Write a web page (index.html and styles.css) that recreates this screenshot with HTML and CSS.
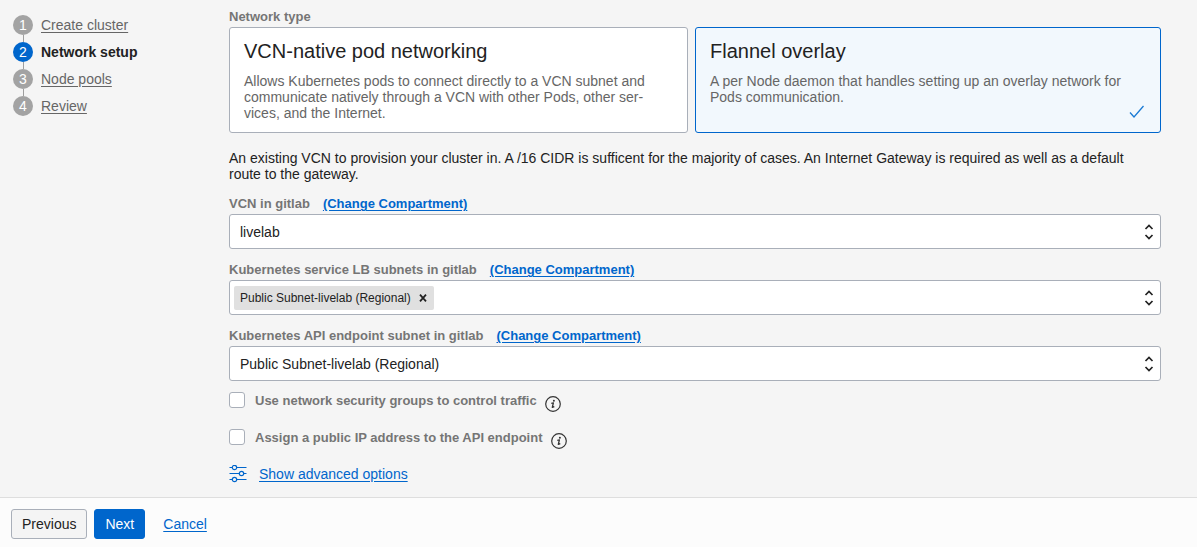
FILE: index.html
```html
<!DOCTYPE html>
<html lang="en">
<head>
<meta charset="utf-8">
<meta name="viewport" content="width=device-width, initial-scale=1">
<title>Create cluster - Network setup</title>
<link rel="stylesheet" href="styles.css">
</head>
<body>
<form class="wizard">
  <div class="content">
    <nav class="steps" aria-label="Steps">
      <ol class="step-list">
        <li class="step"><span class="step-number">1</span><a class="step-name" href="#create">Create cluster</a></li>
        <li class="step current" aria-current="step"><span class="step-number">2</span><strong class="step-name">Network setup</strong></li>
        <li class="step"><span class="step-number">3</span><a class="step-name" href="#pools">Node pools</a></li>
        <li class="step"><span class="step-number">4</span><a class="step-name" href="#review">Review</a></li>
      </ol>
    </nav>
    <main class="main">
      <div class="caption" id="network-type">Network type</div>
      <div class="cards" role="radiogroup" aria-labelledby="network-type">
        <label class="card">
          <input class="card-radio" type="radio" name="network">
          <span class="card-title">VCN-native pod networking</span>
          <span class="card-text">Allows Kubernetes pods to connect directly to a VCN subnet and communicate natively through a VCN with other Pods, other ser&shy;vices, and the Internet.</span>
        </label>
        <label class="card selected">
          <input class="card-radio" type="radio" name="network" checked>
          <span class="card-title">Flannel overlay</span>
          <span class="card-text">A per Node daemon that handles setting up an overlay network for Pods communication.</span>
          <svg class="card-check" width="16" height="14" viewBox="0 0 16 14" aria-hidden="true"><path d="M1 7.500 5 12 14.500 1" fill="none" stroke="currentColor" stroke-width="1.300"/></svg>
        </label>
      </div>
      <p class="intro">An existing VCN to provision your cluster in. A /16 CIDR is sufficent for the majority of cases. An Internet Gateway is required as well as a default route to the gateway.</p>

      <div class="field">
        <div class="field-head"><label class="caption" for="vcn">VCN in <b>gitlab</b></label><a class="change" href="#vcn-compartment">(Change Compartment)</a></div>
        <div class="control">
          <select class="select" id="vcn"><option>livelab</option></select>
          <svg class="arrows" width="10" height="16" viewBox="0 0 10 16" aria-hidden="true"><path d="M1.500 5 5 1.500 8.500 5M1.500 11 5 14.500 8.500 11"/></svg>
        </div>
      </div>
      <div class="field">
        <div class="field-head"><label class="caption" for="lb">Kubernetes service LB subnets in <b>gitlab</b></label><a class="change" href="#lb-compartment">(Change Compartment)</a></div>
        <div class="control tags">
          <span class="tag">Public Subnet-livelab (Regional)<button class="remove" type="button" aria-label="Remove Public Subnet-livelab"><svg width="8" height="8" viewBox="0 0 8 8" aria-hidden="true"><path d="M1 .7 7 7.300M7 .7 1 7.300" stroke="currentColor" stroke-width="1.800"/></svg></button></span>
          <input class="tag-input" id="lb" type="text">
          <svg class="arrows" width="10" height="16" viewBox="0 0 10 16" aria-hidden="true"><path d="M1.500 5 5 1.500 8.500 5M1.500 11 5 14.500 8.500 11"/></svg>
        </div>
      </div>
      <div class="field">
        <div class="field-head"><label class="caption" for="api">Kubernetes API endpoint subnet in <b>gitlab</b></label><a class="change" href="#api-compartment">(Change Compartment)</a></div>
        <div class="control">
          <select class="select" id="api"><option>Public Subnet-livelab (Regional)</option></select>
          <svg class="arrows" width="10" height="16" viewBox="0 0 10 16" aria-hidden="true"><path d="M1.500 5 5 1.500 8.500 5M1.500 11 5 14.500 8.500 11"/></svg>
        </div>
      </div>

      <div class="options">
        <div class="option">
          <input class="check" type="checkbox" id="nsg"><label class="caption" for="nsg">Use network security groups to control traffic</label>
          <svg class="info" width="16" height="16" viewBox="0 0 16 16" aria-hidden="true"><circle cx="8" cy="8" r="7.300" fill="none" stroke="currentColor" stroke-width="1.200"/><circle cx="8.900" cy="4.700" r="1" fill="currentColor"/><path d="M6.300 7.300 8.400 6.900 7.300 11.300 9.300 10.600" fill="none" stroke="currentColor" stroke-width="1.300" stroke-linejoin="round"/></svg>
        </div>
        <div class="option">
          <input class="check" type="checkbox" id="public-ip"><label class="caption" for="public-ip">Assign a public IP address to the API endpoint</label>
          <svg class="info" width="16" height="16" viewBox="0 0 16 16" aria-hidden="true"><circle cx="8" cy="8" r="7.300" fill="none" stroke="currentColor" stroke-width="1.200"/><circle cx="8.900" cy="4.700" r="1" fill="currentColor"/><path d="M6.300 7.300 8.400 6.900 7.300 11.300 9.300 10.600" fill="none" stroke="currentColor" stroke-width="1.300" stroke-linejoin="round"/></svg>
        </div>
      </div>
      <div class="advanced">
        <svg class="sliders" width="18" height="18" viewBox="0 0 18 18" aria-hidden="true"><g fill="none" stroke="currentColor" stroke-width="1.200"><path d="M.5 2.500H3M8 2.500H17.500M.5 8.500H10M15 8.500H17.500M.5 14.500H3M8 14.500H17.500"/><circle cx="5.500" cy="2.500" r="2.200"/><circle cx="12.500" cy="8.500" r="2.200"/><circle cx="5.500" cy="14.500" r="2.200"/></g></svg>
        <a class="link" href="#advanced">Show advanced options</a>
      </div>
    </main>
  </div>
  <footer class="footer">
    <button class="button" type="button">Previous</button>
    <button class="button primary" type="submit">Next</button>
    <a class="link cancel" href="#cancel">Cancel</a>
  </footer>
</form>
</body>
</html>
```

FILE: styles.css
```css
* { box-sizing: border-box; }
body {
  margin: 0;
  background: #f5f5f5;
  color: #222;
  font: 14px/16px "Liberation Sans", Arial, sans-serif;
}
button, input, select { font: inherit; color: inherit; }
.wizard {
  display: flex;
  flex-direction: column;
  min-height: 100vh;
}
.content {
  display: flex;
  flex: 1;
  padding-right: 36px;
}
.steps {
  flex: none;
  width: 229px;
  padding: 15px 0 0 13px;
}
.step-list {
  display: flex;
  flex-direction: column;
  gap: 7px;
  margin: 0;
  padding: 0;
  list-style: none;
}
.step {
  position: relative;
  display: flex;
  align-items: center;
  gap: 8px;
}
.step:not(:last-child)::after {
  content: "";
  position: absolute;
  top: 20px;
  left: 10px;
  width: 1px;
  height: 7px;
  background: #9e9e9e;
}
.step-number {
  width: 20px;
  border-radius: 50%;
  background: #a3a3a3;
  color: #fff;
  line-height: 20px;
  text-align: center;
}
.step-name { color: #666; text-underline-offset: 2px; }
.current .step-number { background: #06c; }
.current .step-name { color: #222; }
.main {
  flex: 1;
  min-width: 0;
  padding: 9px 0 14px;
}
.caption {
  color: #757575;
  font-size: 13px;
  font-weight: bold;
}
.cards {
  display: grid;
  grid-template-columns: 459fr 466fr;
  gap: 7px;
  margin-top: 2px;
}
.card {
  position: relative;
  display: flex;
  flex-direction: column;
  gap: 10px;
  min-height: 106px;
  padding: 11px 30px 11px 14px;
  border: 1px solid #a9afb9;
  border-radius: 3px;
  background: #fff;
}
.selected { border-color: #06c; background: #f2f8fd; }
.card-radio {
  position: absolute;
  opacity: 0;
  pointer-events: none;
}
.card-title { font-size: 20px; line-height: 24px; }
.card-text { color: #666; }
.card-check {
  position: absolute;
  right: 15px;
  bottom: 13px;
  color: #1a7ad4;
}
.intro { margin: 17px 0 14px; padding-right: 20px; }
.field { margin-bottom: 13px; }
.field-head {
  display: flex;
  gap: 13px;
  margin-bottom: 2px;
}
.change, .link { color: #06c; text-underline-offset: 2px; }
.change { font-size: 13px; font-weight: bold; }
.control {
  position: relative;
  display: flex;
  align-items: center;
  height: 35px;
  border: 1px solid #a9afb9;
  border-radius: 3px;
  background: #fff;
}
.select {
  flex: 1;
  height: 100%;
  padding: 0 30px 0 10px;
  border: 0;
  background: transparent;
  appearance: none;
}
.arrows {
  position: absolute;
  right: 6px;
  pointer-events: none;
  fill: none;
  stroke: #222;
  stroke-width: 1.7;
}
.tags { padding: 0 24px 0 4px; }
.tag {
  display: flex;
  align-items: center;
  gap: 7px;
  padding: 4px 6px;
  border-radius: 2px;
  background: #e0e0e0;
  font-size: 12px;
}
.remove {
  display: flex;
  padding: 1px;
  border: 0;
  background: none;
}
.tag-input {
  flex: 1;
  min-width: 0;
  border: 0;
  background: transparent;
}
.options {
  display: flex;
  flex-direction: column;
  gap: 17px;
  margin-top: -2px;
}
.option {
  display: flex;
  align-items: flex-start;
}
.check {
  width: 16px;
  height: 16px;
  margin: 0 10px 0 0;
  border: 1px solid #a9afb9;
  border-radius: 3px;
  background: #fff;
  appearance: none;
}
.option .caption { padding-top: 1px; }
.info { margin: 4px 0 0 8px; color: #333; }
.advanced {
  display: flex;
  align-items: center;
  gap: 12px;
  margin-top: 16px;
}
.sliders { color: #06c; }
.footer {
  display: flex;
  align-items: center;
  gap: 7px;
  padding: 11px 11px 8px;
  border-top: 1px solid #dedede;
  background: #fcfcfc;
}
.button {
  height: 30px;
  padding: 0 10px;
  border: 1px solid #a9afb9;
  border-radius: 3px;
  background: #f4f4f4;
}
.primary { border-color: #06c; background: #06c; color: #fff; }
.cancel { margin-left: 11px; }
```
